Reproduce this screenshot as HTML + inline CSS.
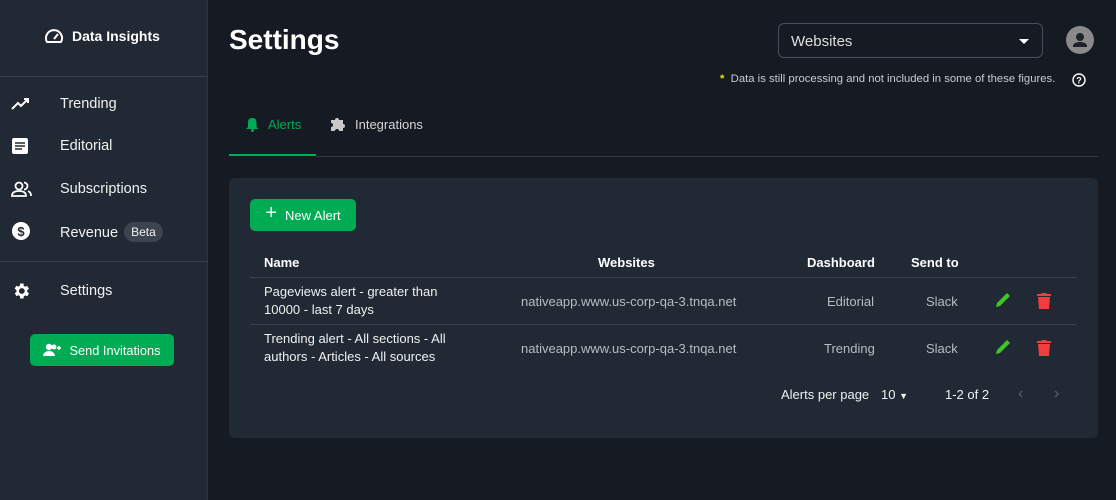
<!DOCTYPE html>
<html><head><meta charset="utf-8"><style>
*{box-sizing:border-box;margin:0;padding:0}
body{width:1116px;height:500px;overflow:hidden;background:#161b23;font-family:"Liberation Sans",sans-serif;color:#fff;position:relative}
.side{position:absolute;left:0;top:0;width:208px;height:500px;background:#212934;border-right:1px solid #2e3643}
.logo{position:absolute;left:44px;top:28px;font-weight:bold;font-size:14px;display:flex;align-items:center;gap:8px}
.hr{position:absolute;left:0;width:207px;height:1px;background:#38404c}
.nav{position:absolute;left:0;display:flex;align-items:center;font-size:14.5px;color:#f0f0f0}
.nav svg{position:absolute;left:11px}
.nav span{position:absolute;left:60px;white-space:nowrap}
.beta{display:inline-block;background:#3c4450;border-radius:11px;font-size:12px;padding:3px 7px;margin-left:2px;vertical-align:1px}
.btn{position:absolute;background:#00ac53;border-radius:5px;color:#fff;font-size:13px;display:flex;align-items:center;justify-content:center;gap:8px}
h1{position:absolute;left:229px;top:24px;font-size:28px;font-weight:bold}
.sel{position:absolute;left:778px;top:23px;width:265px;height:35px;border:1px solid #474e5a;border-radius:6px;font-size:15px;color:#ddd;padding:9px 12px}
.sel:after{content:"";position:absolute;right:13px;top:15px;border:5px solid transparent;border-top-color:#fff;border-bottom:0}
.av{position:absolute;left:1066px;top:26px;width:28px;height:28px;border-radius:50%;background:#8a8a8a}
.note{position:absolute;left:720px;top:73px;font-size:11.3px;color:#c8ccd2}
.tabline{position:absolute;left:229px;top:156px;width:869px;height:1px;background:#353b45}
.card{position:absolute;left:229px;top:178px;width:869px;height:260px;background:#212934;border-radius:6px}
.th{position:absolute;font-size:13px;font-weight:bold;top:77px}
.td{position:absolute;font-size:13px;color:#f0f0f0;line-height:18px}
.g{color:#b8bcc2}
.rl{position:absolute;left:21px;width:827px;height:1px;background:#3a424e}
</style></head><body>
<div class="side">
<div class="logo"><svg width="20" height="16" viewBox="0 0 20 16"><path d="M3 14 A8 8 0 1 1 17 14 Z" fill="none" stroke="#fff" stroke-width="2" stroke-linejoin="round"/><path d="M10 11 L14 6" stroke="#fff" stroke-width="2"/></svg>Data Insights</div>
<div class="hr" style="top:76px"></div>
<div class="nav" style="top:104px"><svg width="20" height="14" viewBox="0 0 20 14"><path d="M1 12 L7 6 L10 9 L17 2 M13 2 H17 V6" fill="none" stroke="#fff" stroke-width="2"/></svg><span style="top:-8px">Trending</span></div>
<div class="nav" style="top:146px"><svg width="18" height="18" viewBox="0 0 18 18" style="top:-9px"><rect x="1" y="1" width="16" height="16" rx="2" fill="#fff"/><path d="M4 6h10M4 9h10M4 12h7" stroke="#212934" stroke-width="1.6"/></svg><span style="top:-8px">Editorial</span></div>
<div class="nav" style="top:189px"><svg width="22" height="16" viewBox="0 0 22 16" style="top:-8px"><circle cx="8" cy="5" r="3.5" fill="none" stroke="#fff" stroke-width="1.8"/><path d="M1 15c0-4 3-5 7-5s7 1 7 5z" fill="none" stroke="#fff" stroke-width="1.8"/><path d="M13 1.5a3.5 3.5 0 0 1 0 7M17 10c2 1 3 2 3 5" fill="none" stroke="#fff" stroke-width="1.8"/></svg><span style="top:-8px">Subscriptions</span></div>
<div class="nav" style="top:231px"><svg width="20" height="20" viewBox="0 0 20 20" style="top:-10px"><circle cx="10" cy="10" r="9" fill="#fff"/><text x="10" y="15" text-anchor="middle" font-size="13" font-weight="bold" fill="#212934" font-family="Liberation Sans">$</text></svg><span style="top:-9px">Revenue <span class="beta" style="position:static">Beta</span></span></div>
<div class="hr" style="top:261px"></div>
<div class="nav" style="top:291px"><svg width="20" height="20" viewBox="0 0 24 24" style="top:-10px"><path fill="#fff" d="M19.4 13a7.5 7.5 0 0 0 0-2l2.1-1.6-2-3.5-2.5 1a7 7 0 0 0-1.7-1L15 3h-4l-.4 2.7a7 7 0 0 0-1.7 1l-2.5-1-2 3.5L6.6 11a7.5 7.5 0 0 0 0 2l-2.1 1.6 2 3.5 2.5-1a7 7 0 0 0 1.7 1L11 21h4l.4-2.7a7 7 0 0 0 1.7-1l2.5 1 2-3.5zM13 15.5a3.5 3.5 0 1 1 0-7 3.5 3.5 0 0 1 0 7z"/></svg><span style="top:-8px">Settings</span></div>
<div class="btn" style="left:30px;top:334px;width:144px;height:32px;font-size:12.8px"><svg width="18" height="14" viewBox="0 0 18 14"><circle cx="6" cy="4" r="3.2" fill="#fff"/><path d="M0 13c0-3 3-5 6-5s6 2 6 5z" fill="#fff"/><circle cx="11" cy="4" r="2.5" fill="#fff"/><path d="M14 5h4M16 3v4" stroke="#fff" stroke-width="1.5"/></svg>Send Invitations</div>
</div>
<h1>Settings</h1>
<div class="sel">Websites</div>
<div class="av"><svg width="28" height="28" viewBox="0 0 28 28"><circle cx="14" cy="11" r="4" fill="#1d232c"/><path d="M7 20c0-3 4-4 7-4s7 1 7 4v1H7z" fill="#1d232c"/></svg></div>
<div class="note"><span style="color:#e6e600;font-weight:bold">*</span>&nbsp; Data is still processing and not included in some of these figures.</div>
<svg style="position:absolute;left:1072px;top:73px" width="14" height="14" viewBox="0 0 14 14"><circle cx="7" cy="7" r="6" fill="none" stroke="#fff" stroke-width="1.4"/><text x="7" y="10.5" text-anchor="middle" font-size="9" font-weight="bold" fill="#fff" font-family="Liberation Sans">?</text></svg>
<svg style="position:absolute;left:246px;top:117px" width="13" height="15" viewBox="0 0 13 15"><path d="M6.5 1c3 0 4 2 4 5v4l2 2H0l2-2V6c0-3 1-5 4.5-5z" fill="#00ac53"/><circle cx="6.5" cy="13.5" r="1.5" fill="#00ac53"/></svg>
<div style="position:absolute;left:268px;top:117px;font-size:13px;color:#00ac53">Alerts</div>
<div style="position:absolute;left:229px;top:154px;width:87px;height:2px;background:#00ac53"></div>
<svg style="position:absolute;left:330px;top:116px" width="16" height="16" viewBox="0 0 16 16"><path d="M1 4h4a2 2 0 1 1 4 0h4v4a2 2 0 1 1 0 4v3H9a2 2 0 1 0-4 0H1v-4a2 2 0 1 0 0-4z" fill="#c8c8c8"/></svg>
<div style="position:absolute;left:355px;top:117px;font-size:13px;color:#d4d4d4">Integrations</div>
<div class="tabline" style="left:316px;width:782px"></div>
<div class="card">
<div class="btn" style="left:21px;top:21px;width:106px;height:32px;font-size:13px"><span style="font-size:20px;font-weight:300;margin-top:-3px">+</span>New Alert</div>
<div class="th" style="left:35px">Name</div>
<div class="th" style="left:369px">Websites</div>
<div class="th" style="left:578px">Dashboard</div>
<div class="th" style="left:682px">Send to</div>
<div class="rl" style="top:99px"></div>
<div class="td" style="left:35px;top:105px">Pageviews alert - greater than<br>10000 - last 7 days</div>
<div class="td g" style="left:292px;top:115px">nativeapp.www.us-corp-qa-3.tnqa.net</div>
<div class="td g" style="left:598px;top:115px">Editorial</div>
<div class="td g" style="left:697px;top:115px">Slack</div>
<div class="rl" style="top:146px"></div>
<div class="td" style="left:35px;top:152px">Trending alert - All sections - All<br>authors - Articles - All sources</div>
<div class="td g" style="left:292px;top:162px">nativeapp.www.us-corp-qa-3.tnqa.net</div>
<div class="td g" style="left:595px;top:162px">Trending</div>
<div class="td g" style="left:697px;top:162px">Slack</div>
<svg style="position:absolute;left:765px;top:113px" width="18" height="18" viewBox="0 0 18 18"><path d="M2 16l1-4L13 2l3 3L6 15z" fill="#3fc42a"/></svg>
<svg style="position:absolute;left:808px;top:114px" width="14" height="17" viewBox="0 0 14 17"><path d="M0 2h4l1-1h4l1 1h4v2H0z M1 5h12l-1 12H2z" fill="#f03d3d"/></svg>
<svg style="position:absolute;left:765px;top:160px" width="18" height="18" viewBox="0 0 18 18"><path d="M2 16l1-4L13 2l3 3L6 15z" fill="#3fc42a"/></svg>
<svg style="position:absolute;left:808px;top:161px" width="14" height="17" viewBox="0 0 14 17"><path d="M0 2h4l1-1h4l1 1h4v2H0z M1 5h12l-1 12H2z" fill="#f03d3d"/></svg>
<div class="td" style="left:552px;top:208px">Alerts per page</div>
<div class="td" style="left:652px;top:208px">10 <span style="font-size:9px">▼</span></div>
<div class="td" style="left:716px;top:208px">1-2 of 2</div>
<div class="td" style="left:789px;top:207px;color:#5a616b;font-size:16px">‹</div>
<div class="td" style="left:825px;top:207px;color:#5a616b;font-size:16px">›</div>
</div>
</body></html>
